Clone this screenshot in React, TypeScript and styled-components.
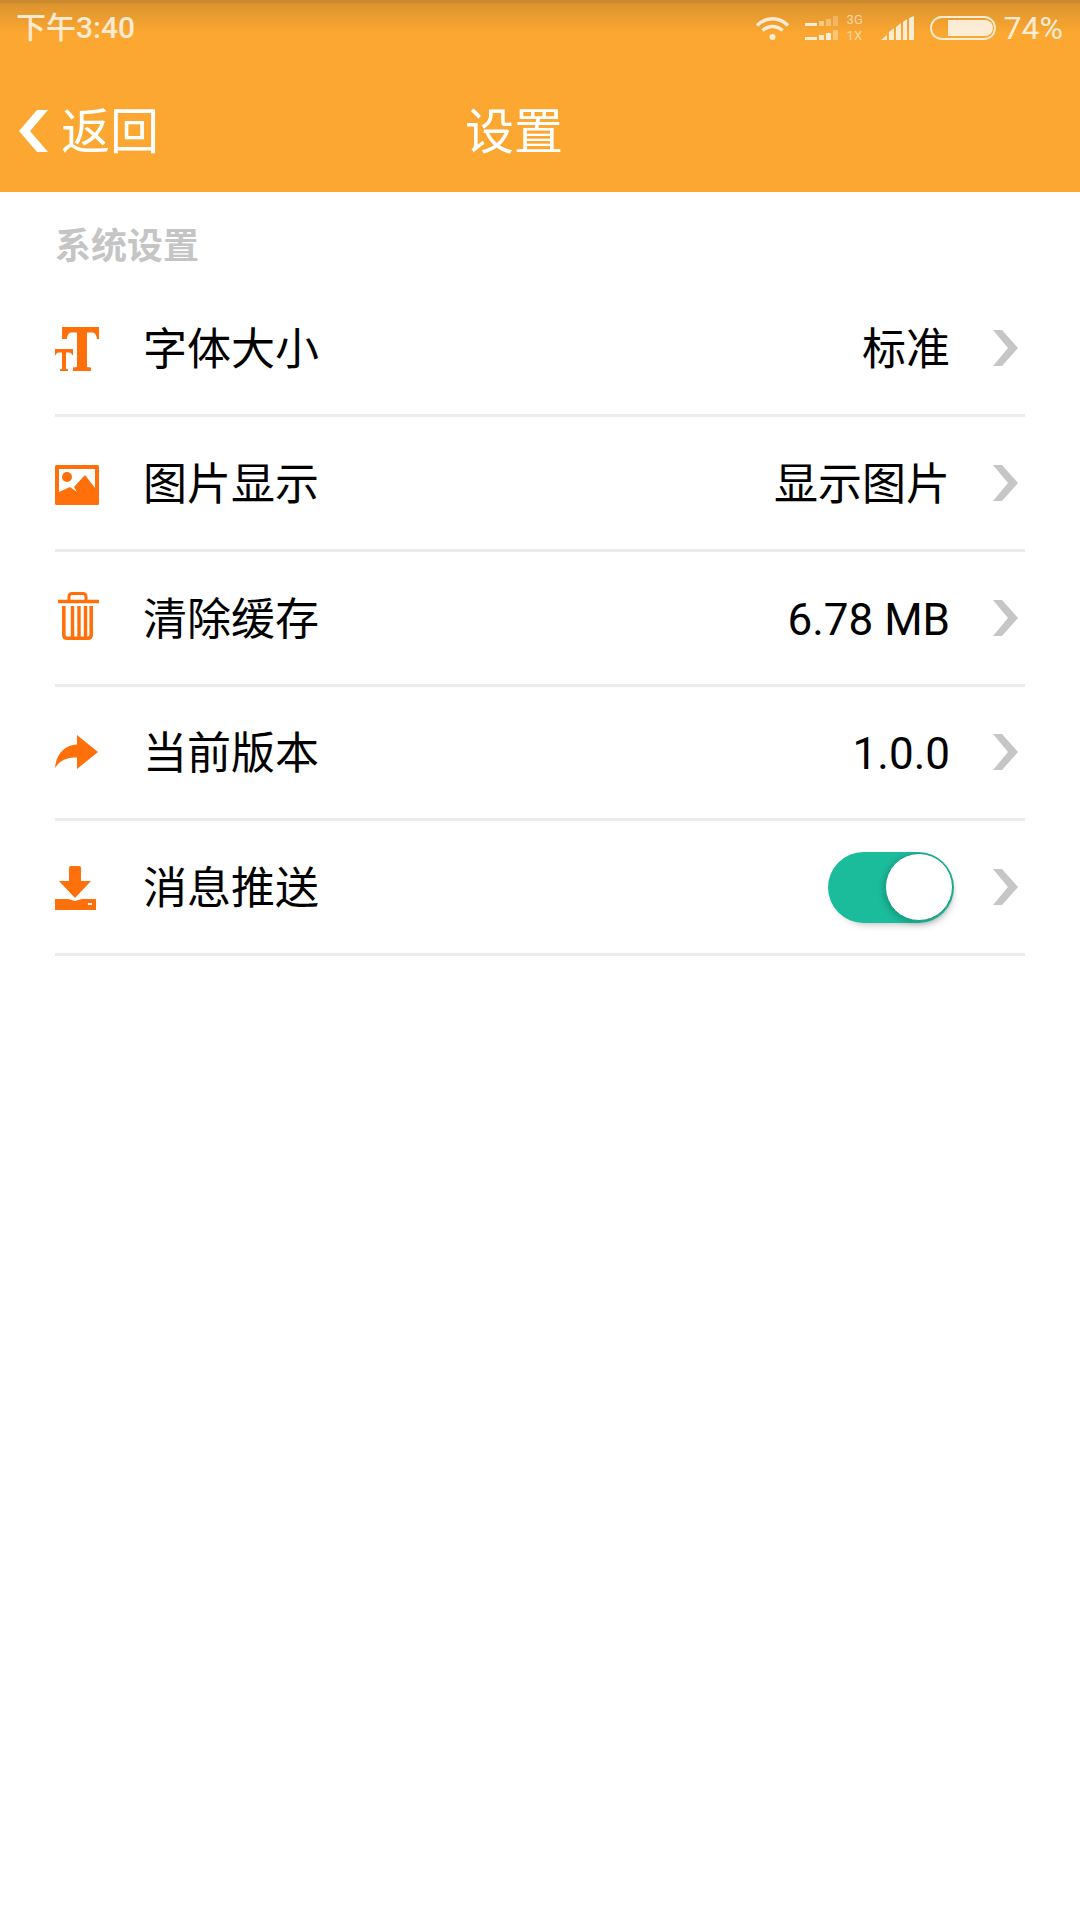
import React from 'react';
import styled, { createGlobalStyle } from 'styled-components';

const FONT = `Roboto, "Noto Sans CJK SC", sans-serif`;
const ORANGE = '#ff6f0a';

const GlobalStyle = createGlobalStyle`
  html, body {
    margin: 0;
    padding: 0;
    background: #fff;
    font-family: ${FONT};
  }
`;

interface SettingItem {
  label: string;
  value?: string;
  icon: React.ReactNode;
  toggle?: boolean;
}

const FontSizeIcon = () => (
  <svg width="45" height="48" viewBox="0 -2 45 48" fill={ORANGE}>
    <path d="M7 1h37v12h-2c-.5-4-2-6.500-5-6.500h-5V41l4 .5V45H18v-3.500l4-.5V6.500h-5c-3 0-5 2.500-5 6.500H7z" />
    <path d="M0 23h18v6h-1c-.4-1.500-1-2.500-3-2.500h-3V43l2 .3V45H5v-1.700l2-.3V26.500H4c-2 0-2.600 1-3 2.500H0z" />
  </svg>
);

const ImageIcon = () => (
  <svg width="45" height="44" viewBox="0 -4 45 44">
    <rect x="0" width="44" height="40" rx="1.500" fill={ORANGE} />
    <path d="M4 4h36v19l-10-13-11 12 3 5-7-5-11 5z" fill="#fff" />
    <circle cx="12" cy="12" r="5" fill={ORANGE} />
  </svg>
);

const TrashIcon = () => (
  <svg width="45" height="52" viewBox="0 0 45 52" fill="none" stroke={ORANGE}>
    <path d="M3 9.500h41" strokeWidth="3.500" />
    <path d="M14 8V4.500q0-3 3-3h11q3 0 3 3V8" strokeWidth="3" />
    <path d="M8.800 14v29q0 3.200 3.200 3.200h21q3.200 0 3.200-3.200V14" strokeWidth="3.600" />
    <path d="M17.500 14v31M24 14v31M30.500 14v31" strokeWidth="3.400" />
  </svg>
);

const ShareIcon = () => (
  <svg width="45" height="34" viewBox="0 0 45 34" fill={ORANGE}>
    <path d="M43 17 22 0v9.500C10 10 1 19 0 33c5-8 12-10.500 22-10.500V34z" />
  </svg>
);

const DownloadIcon = () => (
  <svg width="45" height="46" viewBox="0 -2 45 46">
    <path d="M14 2q0-2 2-2h8q2 0 2 2v13h10L20 32 4 15h10z" fill={ORANGE} />
    <path d="M0 33h13l7 2 7-2h14v11H0z" fill={ORANGE} />
    <rect x="33" y="37" width="4" height="2" fill="#fff" />
  </svg>
);

const ITEMS: SettingItem[] = [
  { label: '字体大小', value: '标准', icon: <FontSizeIcon /> },
  { label: '图片显示', value: '显示图片', icon: <ImageIcon /> },
  { label: '清除缓存', value: '6.78 MB', icon: <TrashIcon /> },
  { label: '当前版本', value: '1.0.0', icon: <ShareIcon /> },
  { label: '消息推送', toggle: true, icon: <DownloadIcon /> },
];

const SIM_BARS = [
  [0, 7, 12, 3],
  [14, 5, 5, 5],
  [21, 3, 5, 7],
  [28, 0, 5, 10],
];

const TOP_LEVELS = [1, 0.55, 0.4, 0.3];
const BOTTOM_LEVELS = [1, 1, 1, 0.45];

const App: React.FC = () => (
  <Page>
    <GlobalStyle />
    <Header>
      <StatusBar>
        <StatusTime>下午3:40</StatusTime>
        <StatusIcons>
          <svg width="35" height="24" viewBox="0 0 35 24" fill="none" stroke="#fff">
            <path d="M2 9.500c9-9 22-9 31 0" strokeWidth="3.500" />
            <path d="M7.500 14.500c6-5.500 14-5.500 20 0" strokeWidth="3.500" />
            <circle cx="17.500" cy="21" r="3" fill="#fff" stroke="none" />
          </svg>
          <SimGroup>
            <SimBars>
              <svg width="34" height="10" viewBox="0 0 34 10" fill="#fff">
                {SIM_BARS.map(([x, y, w, h], i) => (
                  <rect key={x} x={x} y={y} width={w} height={h} opacity={TOP_LEVELS[i]} />
                ))}
              </svg>
              <svg width="34" height="10" viewBox="0 0 34 10" fill="#fff">
                {SIM_BARS.map(([x, y, w, h], i) => (
                  <rect key={x} x={x} y={y} width={w} height={h} opacity={BOTTOM_LEVELS[i]} />
                ))}
              </svg>
            </SimBars>
            <SimLabels>
              <span>3G</span>
              <span>1X</span>
            </SimLabels>
          </SimGroup>
          <svg width="34" height="24" viewBox="0 0 34 24" fill="#fff">
            <path d="M0 24l6-5v5zM8 24v-8l5-4v12zM15 24V11l5-4v17zM22 24V6l4-3v21zM28 24V2l5-2v24z" />
          </svg>
          <svg width="66" height="24" viewBox="0 0 66 24">
            <rect x="1" y="1" width="64" height="22" rx="11" fill="none" stroke="#fff" strokeWidth="1.800" />
            <path d="M18 4h37a8 8 0 0 1 0 16H18z" fill="#fff" />
          </svg>
          <BatteryText>74%</BatteryText>
        </StatusIcons>
      </StatusBar>
      <NavBar>
        <BackButton>
          <svg width="29" height="42" viewBox="0 0 29 42" fill="#fff">
            <path d="M18 0h11L11 21l18 21H18L0 21z" />
          </svg>
          <BackText>返回</BackText>
        </BackButton>
        <NavTitle>设置</NavTitle>
      </NavBar>
    </Header>
    <SectionTitle>系统设置</SectionTitle>
    <List>
      {ITEMS.map(item => (
        <Row key={item.label}>
          <IconCell>{item.icon}</IconCell>
          <Label>{item.label}</Label>
          {item.toggle ? (
            <Toggle>
              <Knob />
            </Toggle>
          ) : (
            <Value>{item.value}</Value>
          )}
          <Chevron $toggle={item.toggle} width="25" height="36" viewBox="0 0 25 36" fill="#c6c6c6">
            <path d="M0 0h9l16 18L9 36H0l15-18z" />
          </Chevron>
        </Row>
      ))}
    </List>
  </Page>
);

export default App;

const Page = styled.div`
  width: 1080px;
  height: 1920px;
  background: #fff;
  overflow: hidden;
`;

const Header = styled.header`
  height: 192px;
  background: #fca731;
  color: #fff;
`;

const StatusBar = styled.div`
  height: 56px;
  padding: 0 17px 0 16px;
  box-sizing: border-box;
  display: flex;
  align-items: center;
  justify-content: space-between;
  background: linear-gradient(#c98a2f 0, #cd8b2e 3px, #dd952f 4px, #fca731 34px);
`;

const StatusTime = styled.span`
  font-size: 30px;
  line-height: 36px;
  font-weight: 500;
  opacity: 0.78;
`;

const StatusIcons = styled.div`
  display: flex;
  align-items: center;
  gap: 15px;

  > svg {
    opacity: 0.8;
  }
`;

const SimGroup = styled.div`
  display: flex;
  align-items: center;
  gap: 8px;
  opacity: 0.8;
`;

const SimBars = styled.div`
  display: flex;
  flex-direction: column;
  gap: 4px;

  svg {
    display: block;
  }
`;

const SimLabels = styled.div`
  display: flex;
  flex-direction: column;
  font-size: 13px;
  line-height: 16px;
  width: 19px;
  opacity: 0.7;
`;

const BatteryText = styled.span`
  font-size: 32px;
  line-height: 36px;
  opacity: 0.8;
  margin-left: -7px;
`;

const NavBar = styled.nav`
  height: 136px;
  padding-top: 14px;
  box-sizing: border-box;
  display: grid;
  grid-template-columns: 465px 1fr;
  align-items: center;
`;

const BackButton = styled.div`
  display: flex;
  align-items: center;
  gap: 13px;
  padding-left: 19px;
`;

const BackText = styled.span`
  font-size: 49px;
  line-height: 60px;
  padding-top: 4px;
`;

const NavTitle = styled.h1`
  margin: 0;
  font-size: 49px;
  line-height: 60px;
  padding-top: 4px;
  font-weight: 400;
`;

const SectionTitle = styled.h2`
  margin: 0;
  height: 90.5px;
  box-sizing: border-box;
  padding: 32px 0 0 55px;
  font-size: 36px;
  line-height: 46px;
  font-weight: 700;
  color: #c5c5c5;
`;

const List = styled.div`
  margin: 0 55px;
`;

const Row = styled.div`
  height: 134.7px;
  box-sizing: border-box;
  display: flex;
  align-items: center;
  border-bottom: 3px solid #ececec;
`;

const IconCell = styled.div`
  width: 88px;
  flex: none;
  display: flex;
  align-items: center;

  svg {
    display: block;
  }
`;

const Label = styled.span`
  flex: 1;
  font-size: 44px;
  line-height: 56px;
  padding-top: 4px;
  color: #000;
`;

const Value = styled.span`
  font-size: 44px;
  line-height: 56px;
  padding-top: 4px;
  color: #000;
`;

const Chevron = styled.svg<{ $toggle?: boolean }>`
  flex: none;
  margin-left: ${({ $toggle }) => ($toggle ? '39px' : '43px')};
  margin-right: 7px;
`;

const Toggle = styled.div`
  width: 126px;
  height: 71px;
  box-sizing: border-box;
  padding-right: 1px;
  border-radius: 36px;
  background: #1abc9c;
  display: flex;
  align-items: center;
  justify-content: flex-end;
  box-shadow: 3px 6px 8px -6px rgba(0, 0, 0, 0.35);
`;

const Knob = styled.div`
  width: 68px;
  height: 68px;
  box-sizing: border-box;
  border-radius: 50%;
  background: #fff;
  border: 1px solid #1a9f85;
  box-shadow: -2px 2px 6px rgba(0, 0, 0, 0.18);
`;
